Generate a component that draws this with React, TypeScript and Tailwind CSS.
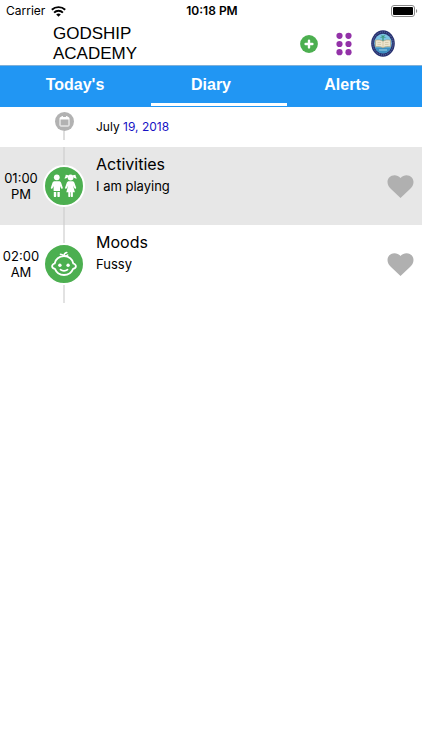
import React from "react";

const sans = "font-['Inter','Liberation_Sans',sans-serif]";
const helvetica = "font-['Liberation_Sans',Arial,sans-serif]";

function StatusBar() {
  return (
    <div className="grid h-[22px] grid-cols-3 items-center pr-1 pl-1.5 text-xs text-black">
      <div className="flex items-center gap-1.5">
        <span>Carrier</span>
        <svg className="h-[11px] w-[15px]" viewBox="0 0 15 11" fill="none" stroke="#000" strokeWidth="1.9" aria-label="Wi-Fi">
          <path d="M0.8 3.800a9.600 9.600 0 0 1 13.400 0" />
          <path d="M3.100 6.600a6.200 6.200 0 0 1 8.800 0" />
          <path d="M7.500 10.800 5.200 8.500a3.300 3.300 0 0 1 4.600 0z" fill="#000" stroke="none" />
        </svg>
      </div>
      <div className="text-center font-semibold whitespace-nowrap">10:18 PM</div>
      <svg className="h-3 w-[27px] justify-self-end" viewBox="0 0 27 12" aria-label="Battery full">
        <rect x="0.5" y="0.5" width="23" height="11" rx="2.5" fill="#fff" stroke="#888" />
        <rect x="2" y="2" width="20" height="8" rx="1" fill="#000" />
        <path d="M25 4v4c1.600-.6 1.600-3.400 0-4z" fill="#888" />
      </svg>
    </div>
  );
}

function Crest() {
  return (
    <svg className="h-[27px] w-6" viewBox="0 0 24 27" aria-hidden="true">
      <ellipse cx="12" cy="13.5" rx="11.8" ry="13.2" fill="#26306f" />
      <ellipse cx="12" cy="13.5" rx="10.2" ry="11.5" fill="none" stroke="#6d7bae" strokeWidth="1" strokeDasharray="1 1" />
      <ellipse cx="12" cy="13.5" rx="8.8" ry="9.8" fill="#7cc4e4" />
      <path d="M4 17.5h16c-1 3.700-4.300 5.800-8 5.800s-7-2.100-8-5.800z" fill="#3d8fc2" />
      <path d="M11.300 11V7.500L8.800 8l2.200-1.700L10 4.700l2 1 2.200-1-1.200 1.700L15.500 8l-2.800-.5V11z" fill="#3f9a83" />
      <path d="M4.500 10.300c3-.8 5.500-.3 7.500 1 2-1.300 4.500-1.800 7.500-1v6.500c-3-.6-5.500-.2-7.500 1-2-1.200-4.500-1.600-7.500-1z" fill="#ece4cd" stroke="#a9986e" strokeWidth=".6" />
      <path d="M12 11.300v6.500M6.500 12.500h3.500M6.500 14.500h3.500M14 12.500h3.500M14 14.500h3.500" stroke="#c9bb95" strokeWidth=".6" />
      <path d="M8 20h8" stroke="#a8d7e7" strokeWidth="1" />
    </svg>
  );
}

function Header() {
  return (
    <header className="flex h-[43px] items-center justify-between pr-[27px] pl-[53px]">
      <h1 className={`w-28 text-[17px] leading-5 text-black ${helvetica}`}>GODSHIP ACADEMY</h1>
      <div className="flex items-center">
        <button type="button" aria-label="Add entry" className="mr-[17px]">
          <svg className="h-[18px] w-[18px]" viewBox="0 0 18 18">
            <circle cx="9" cy="9" r="8.900" fill="#4caf50" />
            <path d="M9 5.600v6.800M5.600 9h6.800" stroke="#fff" strokeWidth="2.400" strokeLinecap="round" />
          </svg>
        </button>
        <button type="button" aria-label="Menu" className="mr-[18px]">
          <svg className="h-6 w-[18px]" viewBox="0 0 18 24" fill="#9332a8">
            <circle cx="4.500" cy="3.800" r="3.100" />
            <circle cx="13.500" cy="3.800" r="3.100" />
            <circle cx="4.500" cy="12" r="3.100" />
            <circle cx="13.500" cy="12" r="3.100" />
            <circle cx="4.500" cy="20.200" r="3.100" />
            <circle cx="13.500" cy="20.200" r="3.100" />
          </svg>
        </button>
        <button type="button" aria-label="School profile">
          <Crest />
        </button>
      </div>
    </header>
  );
}

function Tabs() {
  return (
    <nav className={`grid h-[42px] grid-cols-3 border-t border-[#7fb0d8] bg-[#2196f3] px-[7px] text-base font-bold text-white ${helvetica}`}>
      <button type="button" className="pb-1">Today's</button>
      <button type="button" aria-current="page" className="relative pb-1">
        Diary
        <span className="absolute bottom-px left-2 h-[3px] w-full bg-white" />
      </button>
      <button type="button" className="pb-1">Alerts</button>
    </nav>
  );
}

function KidsIcon() {
  return (
    <svg className="h-6 w-7" viewBox="0 0 28 24" fill="#fff" aria-hidden="true">
      <circle cx="6.800" cy="3.300" r="2.900" />
      <path d="M4.800 7.200h4c1.300 0 2 .6 2.400 1.700l1.500 4.500c.4 1.300-1.300 1.900-1.800.7l-.9-2V17H3.600v-4.900l-.9 2c-.5 1.200-2.200.6-1.800-.7l1.500-4.500c.4-1.100 1.100-1.700 2.400-1.700z" />
      <path d="M3.800 18.100h2.400v3.800c0 1.600-2.400 1.600-2.400 0zM7.400 18.100h2.400v3.800c0 1.600-2.400 1.600-2.400 0z" />
      <circle cx="20.600" cy="3.500" r="2.900" />
      <path d="M18.300 1.300 15.800.7c-.2 1.500-.7 2.600-1.400 3.700 1.600.3 2.800-.2 3.600-1.300zM22.900 1.300l2.500-.6c.2 1.500.7 2.600 1.400 3.700-1.600.3-2.800-.2-3.600-1.300z" />
      <path d="M19 7.200h3.200c1.200 0 1.900.6 2.300 1.700l1.600 4.500c.4 1.300-1.300 1.900-1.800.7l-1.300-2.600 1.900 6.800h-2v3.600c0 1.600-2 1.600-2 0v-3.600h-.6v3.600c0 1.600-2 1.600-2 0v-3.600h-2l1.900-6.800-1.300 2.600c-.5 1.200-2.200.6-1.800-.7l1.600-4.500c.4-1.100 1.100-1.700 2.300-1.700z" />
    </svg>
  );
}

function BabyIcon() {
  return (
    <svg className="h-[26px] w-[26px]" viewBox="0 0 26 26" fill="none" stroke="#fff" strokeWidth="1.800" strokeLinecap="round" strokeLinejoin="round" aria-hidden="true">
      <path d="M13 5.200c5 0 8.600 3.200 9.300 7.300 1.600.5 2.600 1.400 2.600 2.700s-1 2.200-2.800 2.600c-1.500 3.600-4.900 6.200-9.100 6.200s-7.600-2.600-9.100-6.200c-1.800-.4-2.800-1.300-2.800-2.600s1-2.200 2.600-2.700C4.400 8.400 8 5.200 13 5.200z" />
      <path d="M12.800 5.200c0-1.800 1-3.200 3-3.700M12.500 4.900c-.7-1.100-1.700-1.600-3.100-1.600M13 4.900c1.400.3 2.800 0 3.700-.9" strokeWidth="1.500" />
      <circle cx="8.900" cy="14.200" r="1.700" fill="#fff" stroke="none" />
      <circle cx="17.100" cy="14.200" r="1.700" fill="#fff" stroke="none" />
      <path d="M9.500 18.600c1.900 1.700 5.100 1.700 7 0" strokeWidth="1.700" />
    </svg>
  );
}

function DateRow() {
  return (
    <div className="flex h-10 bg-white">
      <div className="w-[42px]" />
      <div className="flex w-11 flex-col items-center pt-[5px] pb-[7px]">
        <div className="flex h-[19px] w-[19px] shrink-0 items-center justify-center rounded-full bg-[#b2b2b2]">
          <svg className="h-[11px] w-[11px]" viewBox="0 0 11 11" fill="none" stroke="#fff" aria-hidden="true">
            <rect x="1" y="1.500" width="9" height="8.500" rx=".6" />
            <path d="M1 2.500h9" strokeWidth="2" />
            <path d="M3.200 0v1.500M7.800 0v1.500" strokeWidth="1.400" />
          </svg>
        </div>
        <div className="w-0.5 flex-1 bg-[#dedede]" />
      </div>
      <p className="self-center pl-2.5 text-xs text-black">
        July <span className="text-[#1712c4]">19, 2018</span>
      </p>
    </div>
  );
}

type EntryProps = {
  time: string;
  meridiem: string;
  title: string;
  note: string;
  icon: React.ReactNode;
  shaded?: boolean;
};

function Entry({ time, meridiem, title, note, icon, shaded }: EntryProps) {
  return (
    <li className={`flex h-[78px] text-black ${shaded ? "bg-[#e7e7e7]" : "bg-white"}`}>
      <div className="flex w-[42px] flex-col justify-center text-center text-[13px] leading-4">
        <span>{time}</span>
        <span>{meridiem}</span>
      </div>
      <div className="flex w-11 flex-col items-center">
        <div className={`w-0.5 flex-1 ${shaded ? "bg-[#d8d8d8]" : "bg-[#e2e2e2]"}`} />
        <div className="flex h-[42px] w-[42px] items-center justify-center rounded-full border-2 border-white bg-[#4caf50]">{icon}</div>
        <div className={`w-0.5 flex-1 ${shaded ? "bg-[#d8d8d8]" : "bg-[#e2e2e2]"}`} />
      </div>
      <div className="flex-1 pt-1.5 pl-2.5">
        <h2 className="text-base leading-[22px]">{title}</h2>
        <p className="text-[13px] leading-[22px]">{note}</p>
      </div>
      <button type="button" aria-label={`Like ${title}`} className="pr-2">
        <svg className="h-[23px] w-[27px]" viewBox="0 0 27 23" fill="#b0b0b0">
          <path d="M13.500 3C15.300 1 17.200.2 19.500.2 23.600.2 26.500 3.200 26.500 7c0 3-1.500 5-3.500 7l-9.500 9L4 14C2 12 .500 10 .500 7 .500 3.200 3.400.2 7.500.2c2.300 0 4.200.8 6 2.800z" />
        </svg>
      </button>
    </li>
  );
}

export default function App() {
  return (
    <main className={`min-h-screen bg-white ${sans}`}>
      <StatusBar />
      <Header />
      <Tabs />
      <DateRow />
      <ul>
        <Entry time="01:00" meridiem="PM" title="Activities" note="I am playing" icon={<KidsIcon />} shaded />
        <Entry time="02:00" meridiem="AM" title="Moods" note="Fussy" icon={<BabyIcon />} />
      </ul>
    </main>
  );
}
